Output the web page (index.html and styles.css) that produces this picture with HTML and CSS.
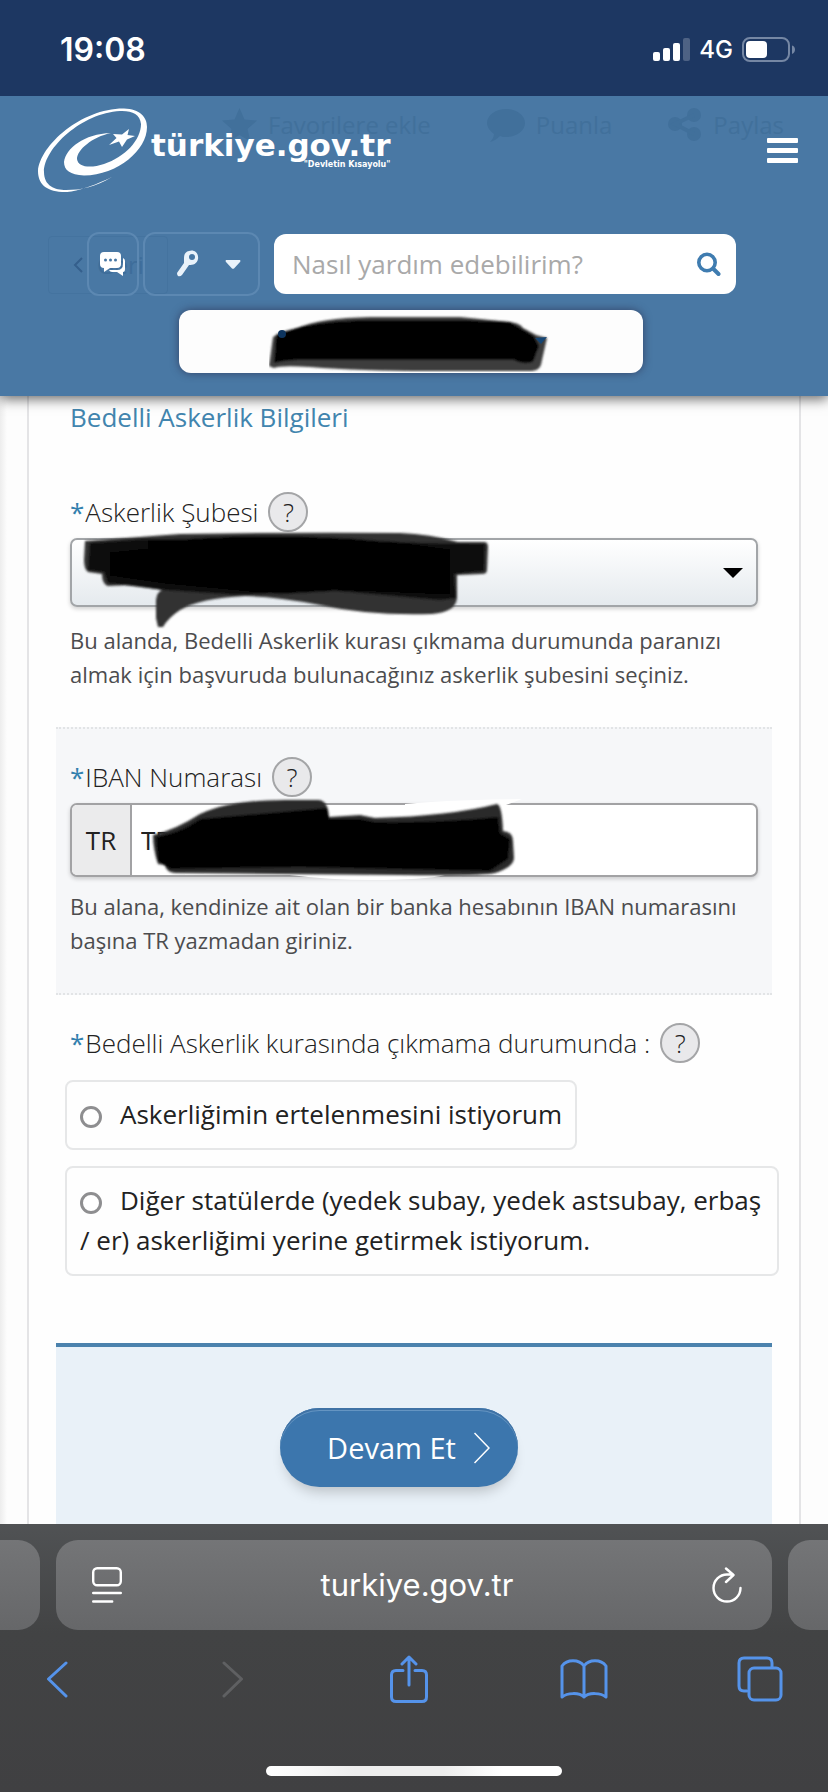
FILE: index.html
```html
<!DOCTYPE html>
<html lang="tr">
<head>
<meta charset="utf-8">
<meta name="viewport" content="width=device-width, initial-scale=1">
<title>Bedelli Askerlik - türkiye.gov.tr</title>
<link rel="stylesheet" href="styles.css">
</head>
<body>
<div class="status">
  <span class="clock">19:08</span>
  <span class="indicators">
    <svg width="37" height="24" viewBox="0 0 37 24" fill="#fff" aria-hidden="true"><rect x="0" y="14" width="7" height="9" rx="2"/><rect x="10" y="10" width="7" height="13" rx="2"/><rect x="20" y="5" width="7" height="18" rx="2"/><rect x="30" y="0" width="7" height="23" rx="2" opacity=".22"/></svg>
    <span class="network">4G</span>
    <svg width="54" height="26" viewBox="0 0 54 26" aria-hidden="true"><rect x="1" y="1" width="46" height="23" rx="7" fill="none" stroke="#7587a4" stroke-width="2"/><rect x="4" y="4" width="21" height="17" rx="4" fill="#fff"/><path d="M50 8.500c4 1 4 7 0 8.500z" fill="#7587a4"/></svg>
  </span>
</div>

<header class="header">
  <div class="under" aria-hidden="true">
    <div class="under-actions">
      <span class="under-item"><svg width="35" height="34" viewBox="0 0 35 34"><path d="M17.500 0l5 11.500 12.500 1-9.500 8.500 3 12.500-11-6.500-11 6.500 3-12.500L0 12.500l12.500-1z"/></svg>Favorilere ekle</span>
      <span class="under-item"><svg width="38" height="34" viewBox="0 0 38 34"><path d="M19 1c10 0 19 6 19 14s-9 14-19 14c-2 0-4 0-6-1-3 3-6 5-10 6 2-2 4-5 4-8C3 23 0 19 0 15 0 7 9 1 19 1z"/></svg>Puanla</span>
      <span class="under-item"><svg width="34" height="34" viewBox="0 0 34 34"><circle cx="26" cy="7" r="7"/><circle cx="7" cy="16" r="7"/><circle cx="26" cy="26" r="7"/><path d="M26 7L7 16l19 10" fill="none" stroke="#41709b" stroke-width="4"/></svg>Paylas</span>
    </div>
    <div class="under-back"><svg width="10" height="16" viewBox="0 0 10 16"><path d="M9 1L2 8l7 7" fill="none" stroke="#355f8c" stroke-width="2"/></svg>Geri</div>
  </div>

  <div class="brand-row">
    <a class="brand" href="#">
      <svg width="110" height="86" viewBox="38 107 110 86" fill="#fff" aria-hidden="true">
        <path d="M112 177C85 190 70 192.500 62 192C45 191 38 183 38 171C40 145 82 108 124 108.500C140 109 147 117 147 127C147 150 118 175 84 175.500C70 175 64 170 64 162C66 148 84 134 111 133C92 137 77 150 77 159C78 168 92 168 104 164C125 157 141 140 141 124C140 114 132 110.500 120 111C82 113 44 148 44 172C44 186 55 190 66 190C82 190 95 187 112 177Z"/>
        <path d="M129 129L127.500 135L135 136L127 139.500L122 147L119 141.500L109 145L116.500 138L113 134L122 134.500Z"/>
      </svg>
      <span class="wordmark"><span class="site">türkiye.gov.tr</span><span class="motto">"Devletin Kısayolu"</span></span>
    </a>
    <button class="menu" type="button" aria-label="Menü"><span></span><span></span><span></span></button>
  </div>

  <div class="tools">
    <button class="ghost chat" type="button" aria-label="Mesajlar">
      <svg width="26" height="24" viewBox="0 0 26 24"><path d="M4 0h13q4 0 4 4v8q0 4-4 4h-7l-6 4v-4q-4 0-4-4V4q0-4 4-4z" fill="#fff"/><circle cx="5.500" cy="8" r="1.500" fill="#4777a4"/><circle cx="10.500" cy="8" r="1.500" fill="#4777a4"/><circle cx="15.500" cy="8" r="1.500" fill="#4777a4"/><path d="M23 6q2 1 2 3v8q0 3-2 3v4l-6-4h-5q-2 0-3-2h8q6 0 6-6z" fill="#fff"/></svg>
    </button>
    <button class="ghost key" type="button" aria-label="Giriş">
      <svg width="22" height="28" viewBox="0 0 22 28"><path d="M12 1c5-2 10 2 9 8-1 5-5 6-9 6L5 25q-2 2-4 1-1-1-1-3L7 13V8q0-6 5-7z" fill="#e9f2fa"/><circle cx="15" cy="7" r="3" fill="#4777a4"/></svg>
      <svg width="16" height="9" viewBox="0 0 16 9"><path d="M1 0h14q1 1 0 2L9 8.500q-1 .5-2 0L1 2q-1-1 0-2z" fill="#e9f2fa"/></svg>
    </button>
    <form class="search">
      <input type="text" placeholder="Nasıl yardım edebilirim?" aria-label="Nasıl yardım edebilirim?">
      <button type="button" aria-label="Ara"><svg width="24" height="25" viewBox="0 0 24 25" fill="none" stroke="#3f7cb0" stroke-linecap="round"><circle cx="10" cy="10.500" r="8.200" stroke-width="3.600"/><path d="M16.500 17l5 5" stroke-width="4"/></svg></button>
    </form>
  </div>

  <button class="user" type="button" aria-label="Kullanıcı">
    <svg width="284" height="62" viewBox="269 310 284 62" aria-hidden="true">
      <defs><filter id="soft" x="-5%" y="-15%" width="110%" height="130%"><feGaussianBlur stdDeviation="1.200"/></filter></defs>
      <g filter="url(#soft)">
        <path d="M269 366L273 337Q280 331 298 328Q320 318 370 317H460L500 321Q520 322 523 328L536 335L547 338L542 360Q541 371 532 371H430Q360 371 310 367Q280 365 274 368Z" fill="#3d3d3d"/>
        <path d="M274 363L276 335L297 328Q320 321 370 320H460L510 322L522 329L534 336L539 346L533 362Q522 365 514 360H320Q290 359 274 363Z" fill="#000"/>
      </g>
      <circle cx="282" cy="334" r="4" fill="#0d345e"/><path d="M535 338l12-1-6 7z" fill="#154573"/>
    </svg>
  </button>
</header>

<main class="page">
  <form class="panel">
    <h1 class="title">Bedelli Askerlik Bilgileri</h1>

    <section class="field">
      <div class="label-row"><label for="sube"><span class="star">*</span>Askerlik Şubesi</label><button class="help" type="button" aria-label="Askerlik Şubesi yardım">?</button></div>
      <div class="control select-wrap">
        <select id="sube"><option></option></select>
        <svg class="caret" width="20" height="10" viewBox="0 0 20 10" aria-hidden="true"><path d="M0 0h20L10 10z"/></svg>
        <svg class="scribble" width="690" height="100" viewBox="70 538 690 100" aria-hidden="true">
          <g filter="url(#soft)">
            <path d="M85 541Q140 537 180 534Q300 532 400 533Q430 534 458 542L484 542Q488 542 488 547L487 570Q487 574 482 574L457 575V598Q456 612 432 614Q370 616 320 605Q280 597 245 596Q200 598 180 610Q168 618 163 627H158L156 618V600Q157 592 162 590L130 585L108 586Q102 584 102 574L88 572Q84 569 84 560Z" fill="#303030"/>
            <path d="M90 543L145 539H200L380 541L420 543L485 544L484 571L454 574L456 598L440 600L350 592Q310 588 290 592L240 595L165 590L108 583L104 572L88 570Z" fill="#070707"/>
            <path d="M148 542Q300 528 420 546L450 550V594L350 590L280 594L165 583L110 575V553L148 549Z" fill="#000"/>
          </g>
        </svg>
      </div>
      <p class="hint">Bu alanda, Bedelli Askerlik kurası çıkmama durumunda paranızı almak için başvuruda bulunacağınız askerlik şubesini seçiniz.</p>
    </section>

    <section class="field shaded">
      <div class="label-row"><label for="iban"><span class="star">*</span>IBAN Numarası</label><button class="help" type="button" aria-label="IBAN Numarası yardım">?</button></div>
      <div class="control iban">
        <span class="prefix">TR</span><input id="iban" type="text" value="TR">
        <svg class="scribble" width="690" height="90" viewBox="72 806 690 90" aria-hidden="true">
          <path d="M405 805Q440 801 522 800L506 806H500L405 808ZM290 876H445Q425 881 370 881Q330 881 290 876Z" fill="#fff"/>
          <g filter="url(#soft)">
            <path d="M153 836Q175 831 200 815Q230 801 285 801H318Q328 801 329 818L360 816L375 819Q450 817 497 805Q502 806 503 832Q513 833 513 842L514 859Q514 868 495 874Q485 877 400 876L175 874Q166 873 165 866L158 865Q153 850 153 836Z" fill="#2b2b2b"/>
            <path d="M156 838Q180 834 200 820L327 809L329 820H360L375 823Q440 824 498 818L500 834L510 840L508 860L490 872L300 868L170 870L158 862Z" fill="#000"/>
          </g>
        </svg>
      </div>
      <p class="hint">Bu alana, kendinize ait olan bir banka hesabının IBAN numarasını başına TR yazmadan giriniz.</p>
    </section>

    <section class="field" role="radiogroup" aria-labelledby="durum">
      <div class="label-row"><span id="durum"><span class="star">*</span>Bedelli Askerlik kurasında çıkmama durumunda :</span><button class="help" type="button" aria-label="Kura yardım">?</button></div>
      <div class="options">
        <label class="option"><input type="radio" name="durum">Askerliğimin ertelenmesini istiyorum</label>
        <label class="option"><input type="radio" name="durum">Diğer statülerde (yedek subay, yedek astsubay, erbaş / er) askerliğimi yerine getirmek istiyorum.</label>
      </div>
    </section>

    <div class="submit">
      <button class="next" type="button">Devam Et<svg width="16" height="32" viewBox="0 0 16 32" fill="none" stroke="#fff" stroke-width="1.500" aria-hidden="true"><path d="M.5 1L15 16 .5 31"/></svg></button>
    </div>
  </form>
</main>

<nav class="browser" aria-label="Tarayıcı">
  <div class="tabs">
    <div class="tab-edge left"></div>
    <div class="address">
      <button type="button" aria-label="Sayfa ayarları"><svg width="30" height="36" viewBox="0 0 30 36" fill="none" stroke="#fff" stroke-width="2.400" stroke-linecap="round"><rect x="1.200" y="1.200" width="27.600" height="17" rx="4"/><path d="M1.200 26h27.600M1.200 34.500h19"/></svg></button>
      <span>turkiye.gov.tr</span>
      <button type="button" aria-label="Yenile"><svg width="30" height="36" viewBox="0 0 30 36" fill="none" stroke="#fff" stroke-width="2.400" stroke-linecap="round" stroke-linejoin="round"><path d="M28.500 21A13.500 13.500 0 1 1 15 7.500h6M14 1.500L21.500 8 14 15"/></svg></button>
    </div>
    <div class="tab-edge right"></div>
  </div>
  <div class="toolbar">
    <button type="button" aria-label="Geri"><svg width="22" height="48" viewBox="0 0 22 48"><path d="M20 8L2.500 24 20 41"/></svg></button>
    <button type="button" aria-label="İleri" disabled><svg width="22" height="48" viewBox="0 0 22 48"><path d="M2 8l17.500 16L2 41"/></svg></button>
    <button type="button" aria-label="Paylaş"><svg width="40" height="48" viewBox="0 0 40 48"><path d="M14 15.500H7q-4.500 0-4.500 4.500v22q0 4.500 4.500 4.500h26q4.500 0 4.500-4.500V20q0-4.500-4.500-4.500h-7M20 30V2M13 9l7-7 7 7"/></svg></button>
    <button type="button" aria-label="Yer imleri"><svg width="48" height="48" viewBox="0 0 48 48"><path d="M24 11C19 4 7 4 2 11v31c5-4 17-5 22 0 5-5 17-4 22 0V11C41 4 29 4 24 11v31"/></svg></button>
    <button type="button" aria-label="Sekmeler"><svg width="46" height="48" viewBox="0 0 46 48"><path d="M10 36H7q-5 0-5-5V8q0-5 5-5h23q5 0 5 5v4"/><rect x="12" y="13" width="32" height="32" rx="5"/></svg></button>
  </div>
  <div class="home"></div>
</nav>
</body>
</html>
```
FILE: styles.css
```css
* { box-sizing: border-box; }

body {
  margin: 0;
  min-height: 100vh;
  display: flex;
  flex-direction: column;
  background: #fdfdfd;
  color: #222;
  font-family: "Open Sans", "Noto Sans", sans-serif;
  font-size: 26px;
  line-height: 40px;
}

button, input, select { font: inherit; color: inherit; }
button { margin: 0; padding: 0; border: 0; background: none; }
svg { display: block; flex: none; }

/* Phone status bar */
.status {
  height: 96px;
  padding: 4px 32px 0 60px;
  display: flex;
  align-items: center;
  justify-content: space-between;
  background: #1d3762;
  color: #fff;
  font-family: Inter, sans-serif;
}
.clock { font-size: 32px; font-weight: 600; }
.indicators { display: flex; align-items: center; gap: 9px; }
.network { font-size: 24px; font-weight: 500; }

/* Site header */
.header {
  position: relative;
  z-index: 1;
  height: 300px;
  padding: 11px 0 0;
  display: flex;
  flex-direction: column;
  background: #4978a4;
  box-shadow: 0 3px 12px rgba(0, 0, 0, .6);
  clip-path: inset(0 0 -20px);
}
.under {
  position: absolute;
  inset: 0;
  color: #41709b;
  font-size: 24px;
  overflow: hidden;
}
.under svg { fill: #41709b; }
.under-actions {
  display: flex;
  justify-content: flex-end;
  gap: 56px;
  padding: 9px 44px 0 0;
}
.under-item { display: flex; align-items: center; gap: 11px; }
.under-back {
  width: 120px;
  margin: 91px 0 0 48px;
  padding: 8px 0 8px 24px;
  display: flex;
  align-items: center;
  gap: 14px;
  border: 1px solid #44739f;
  border-radius: 4px;
  color: #3e6d9a;
}
.brand-row {
  position: relative;
  height: 125px;
  padding: 0 30px 0 38px;
  display: flex;
  align-items: flex-start;
  justify-content: space-between;
}
.brand {
  display: flex;
  gap: 3px;
  color: #fff;
  text-decoration: none;
  font-family: "DejaVu Sans", sans-serif;
  font-weight: 700;
}
.wordmark {
  padding-top: 22px;
  display: flex;
  flex-direction: column;
  align-items: flex-end;
}
.site { font-size: 31px; line-height: 32px; }
.motto { font-size: 8px; line-height: 8px; }
.menu {
  width: 31px;
  margin-top: 31px;
  display: flex;
  flex-direction: column;
  gap: 5px;
}
.menu span { height: 5px; border-radius: 1px; background: #fff; }

.tools {
  position: relative;
  padding: 0 92px 0 87px;
  display: flex;
  align-items: center;
}
.ghost {
  height: 64px;
  display: flex;
  align-items: center;
  justify-content: center;
  border: 2px solid #5c88b2;
  border-radius: 12px;
}
.chat { width: 52px; margin-right: 4px; }
.key { width: 117px; margin-right: 14px; gap: 26px; padding-left: 15px; }
.search {
  flex: 1;
  min-width: 0;
  height: 60px;
  padding: 0 15px 0 18px;
  display: flex;
  align-items: center;
  border-radius: 12px;
  background: #fff;
}
.search input {
  flex: 1;
  min-width: 0;
  padding: 0;
  border: 0;
  outline: 0;
  background: none;
}
.search input::placeholder { color: #a9a9a9; opacity: 1; }
.user {
  position: relative;
  width: 56%;
  height: 63px;
  margin: 14px 185px 0 auto;
  display: flex;
  justify-content: center;
  border-radius: 12px;
  background: #fdfdfd;
  box-shadow: 0 0 9px rgba(40, 40, 70, .65);
}

/* Form */
.page {
  flex: 1;
  display: flex;
  padding: 0 27px;
  background: linear-gradient(90deg, #ededed, #fdfdfd 7px);
}
.panel {
  flex: 1;
  min-width: 0;
  padding: 0 27px;
  display: flex;
  flex-direction: column;
  border: solid #e4e4e6;
  border-width: 0 2px;
  background: #fefefe;
}
.title {
  margin: 0 0 26px;
  padding: 0 14px;
  color: #4285ae;
  font-size: 26px;
  line-height: 42px;
  font-weight: 400;
}
.field { padding: 28px 14px 36px; }
.shaded {
  border: dotted #e2e4e6;
  border-width: 2px 0;
  background: #f6f7f9;
}
.label-row {
  display: flex;
  align-items: center;
  gap: 10px;
  font-weight: 300;
}
.star { margin-right: 1px; color: #3380ae; font-weight: 400; }
.help {
  flex: none;
  width: 40px;
  height: 40px;
  border: 2px solid #a4a5a7;
  border-radius: 50%;
  background: #e9e9eb;
  line-height: 36px;
  font-weight: 300;
}
.control {
  position: relative;
  margin-top: 6px;
  border-radius: 7px;
  box-shadow: 0 2px 4px rgba(0, 0, 0, .18);
}
.select-wrap { height: 69px; }
.select-wrap select {
  width: 100%;
  height: 100%;
  padding: 0 30px;
  appearance: none;
  border: 2px solid #a2a5a8;
  border-radius: 7px;
  background: linear-gradient(#fff, #e5eaee);
}
.caret { position: absolute; right: 15px; top: 30px; }
.scribble {
  position: absolute;
  left: 0;
  top: 0;
  overflow: visible;
  pointer-events: none;
}
.iban {
  height: 74px;
  display: flex;
  border: 2px solid #a2a2a4;
  background: #fff;
}
.prefix {
  width: 60px;
  border-right: 2px solid #a2a2a4;
  border-radius: 5px 0 0 5px;
  background: #ebebec;
  line-height: 70px;
  text-align: center;
}
.iban input {
  flex: 1;
  min-width: 0;
  padding: 0 9px;
  border: 0;
  outline: 0;
  background: none;
}
.hint {
  margin: 16px 0 0;
  color: #4c4c4e;
  font-size: 22px;
  line-height: 34px;
}
.shaded .hint { margin-top: 12px; }

.options {
  margin: 17px -21px 0 -5px;
  display: flex;
  flex-direction: column;
  align-items: flex-start;
  gap: 16px;
}
.option {
  padding: 12px 13px 14px;
  border: 2px solid #e6e7e8;
  border-radius: 8px;
}
.option input {
  width: 22px;
  height: 22px;
  margin: 0 18px 0 0;
  appearance: none;
  border: 3px solid #8e8e90;
  border-radius: 50%;
  background: #fff;
  vertical-align: -4px;
}
.submit {
  flex: 1;
  margin-top: 31px;
  padding: 61px 0 20px;
  display: flex;
  align-items: flex-start;
  justify-content: center;
  border-top: 4px solid #4b82ad;
  background: #e9f1f8;
}
.next {
  height: 79px;
  margin-right: 30px;
  padding: 0 28px 0 47px;
  display: flex;
  align-items: center;
  gap: 18px;
  border-radius: 40px;
  background: #3c76ad;
  color: #fff;
  font-size: 29px;
  box-shadow: 0 10px 14px -6px rgba(0, 0, 0, .22), inset 0 2px 0 #3f72a5, inset 0 3px 0 #6595c2;
}

/* Browser chrome */
.browser {
  height: 268px;
  padding-top: 16px;
  display: flex;
  flex-direction: column;
  background: linear-gradient(#505254, #424344 110px, #404042);
  color: #fff;
}
.tabs { display: flex; gap: 16px; height: 90px; }
.tab-edge, .address { background: linear-gradient(#747577, #666769); }
.tab-edge { width: 40px; }
.left { border-radius: 0 22px 22px 0; }
.right { border-radius: 22px 0 0 22px; }
.address {
  flex: 1;
  padding: 0 30px 0 36px;
  display: flex;
  align-items: center;
  justify-content: space-between;
  border-radius: 22px;
  font-family: Inter, sans-serif;
  font-size: 31px;
}
.toolbar {
  padding: 25px 45px 0 34px;
  display: flex;
  justify-content: space-between;
}
.toolbar button {
  width: 46px;
  display: flex;
  justify-content: center;
}
.toolbar svg {
  fill: none;
  stroke: #5593ea;
  stroke-width: 3;
  stroke-linecap: round;
  stroke-linejoin: round;
}
.toolbar button:disabled svg { stroke: #5f6062; }
.home {
  width: 296px;
  height: 10px;
  margin: auto auto 16px;
  border-radius: 5px;
  background: linear-gradient(90deg, #fff, #ededed 30%, #ededed 60%, #fff 80%);
}
```
